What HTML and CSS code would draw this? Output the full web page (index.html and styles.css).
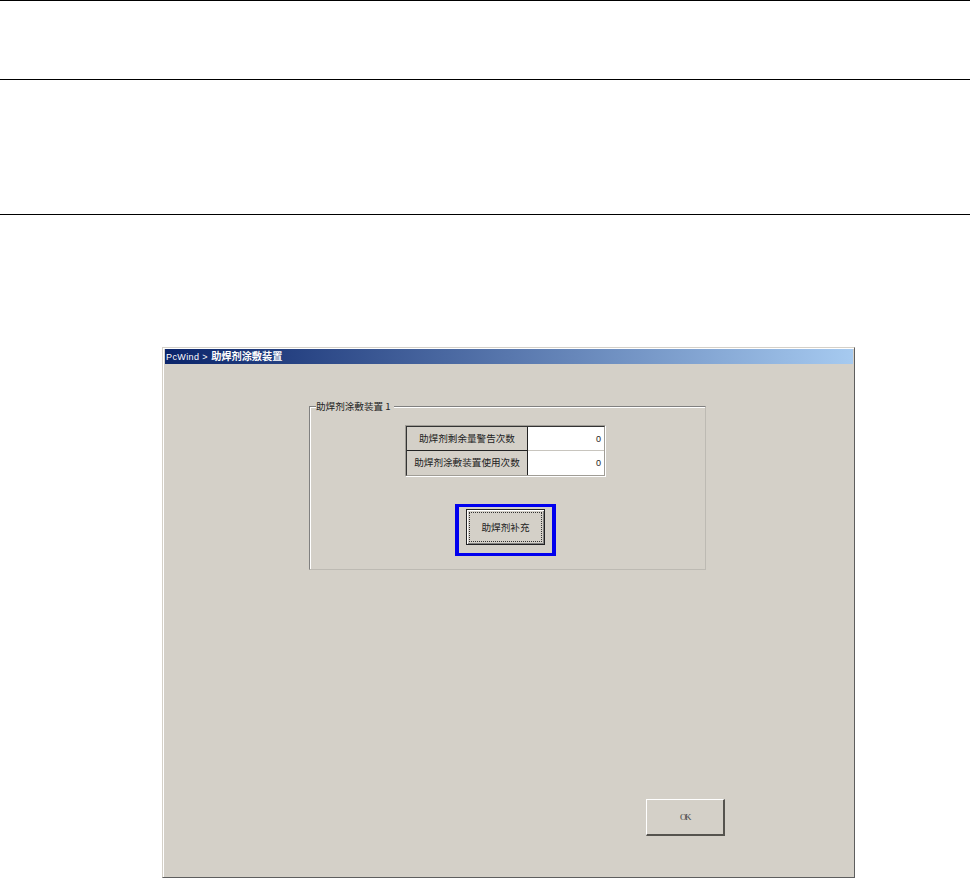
FILE: index.html
```html
<!DOCTYPE html>
<html lang="zh">
<head>
<meta charset="utf-8">
<title>PcWind</title>
<link rel="stylesheet" href="styles.css">
</head>
<body>
<div class="rows">
  <div class="row row-a"></div>
  <div class="row row-b"></div>
  <div class="row row-c"></div>
</div>
<div class="window">
  <div class="titlebar"><span class="title-latin">PcWind &gt;</span> <span class="title-cjk">助焊剂涂敷装置</span></div>
  <div class="client">
    <fieldset class="group">
      <legend class="legend">助焊剂涂敷装置 1</legend>
      <div class="grid-frame">
        <div class="grid">
          <div class="label">助焊剂剩余量警告次数</div>
          <div class="value">0</div>
          <div class="label label-last">助焊剂涂敷装置使用次数</div>
          <div class="value value-last">0</div>
        </div>
      </div>
      <div class="highlight">
        <button class="btn btn-focus"><span class="focus-ring">助焊剂补充</span></button>
      </div>
    </fieldset>
    <div class="actions">
      <button class="btn btn-ok">OK</button>
    </div>
  </div>
</div>
</body>
</html>
```
FILE: styles.css
```css
* { box-sizing: border-box; }
html, body { margin: 0; padding: 0; background: #fff; }
body {
  width: 970px;
  height: 878px;
  overflow: hidden;
  font-family: "Noto Sans CJK SC", "Liberation Sans", sans-serif;
  font-size: 9.6px;
  color: #222;
}
.row { border-top: 1px solid #000; }
.row-a { height: 79px; }
.row-b { height: 135px; }
.row-c { height: 133px; }

.window {
  width: 693px;
  height: 531px;
  margin-left: 162px;
  padding: 1px 1px 1px 2px;
  background: #d4d0c8;
  border-top: 1px solid #d4d0c8;
  border-left: 1px solid #d4d0c8;
  border-right: 1px solid #5e5e5e;
  border-bottom: 1px solid #5e5e5e;
  box-shadow: inset 1px 1px 0 #fff;
  display: flex;
  flex-direction: column;
}
.titlebar {
  height: 15px;
  flex: none;
  padding-left: 1px;
  line-height: 14px;
  white-space: nowrap;
  color: #fff;
  background: linear-gradient(90deg, #0a246a, #a6caf0);
}
.title-latin {
  font-family: "Liberation Sans", sans-serif;
  font-size: 9px;
  letter-spacing: 0.4px;
  margin-right: 1px;
}
.title-cjk {
  font-size: 10.2px;
  font-weight: 700;
}
.client {
  flex: 1;
  display: flex;
  flex-direction: column;
  padding: 36px 0 0 144px;
}
.group {
  width: 397px;
  height: 170px;
  margin: 0;
  padding: 13px 0 0;
  min-width: 0;
  border: 1px solid #808080;
  border-right-color: #bdbab3;
  border-bottom-color: #bdbab3;
  box-shadow: inset 1px 1px 0 #fff;
}
.legend {
  margin-left: 6px;
  padding: 0 3px 0 0;
  line-height: 12px;
  background: #d4d0c8;
}
.grid-frame {
  width: 201px;
  height: 52px;
  margin-left: 95px;
  border: 1px solid #a09d96;
  border-right-color: #fff;
  border-bottom-color: #fff;
}
.grid {
  display: grid;
  grid-template-columns: 121px 76px;
  grid-template-rows: 24px 24px;
  height: 50px;
  border: 1px solid #333;
  border-right-color: #a09d96;
  border-bottom-color: #a09d96;
}
.label {
  display: flex;
  align-items: center;
  justify-content: center;
  background: #d4d0c8;
  border-right: 1px solid #222;
  border-bottom: 1px solid #222;
  line-height: 1;
  white-space: nowrap;
}
.label-last { border-bottom: 0; }
.value {
  display: flex;
  align-items: center;
  justify-content: flex-end;
  padding-right: 3px;
  background: #fff;
  border-bottom: 1px solid #c8c5be;
  font-family: "Liberation Sans", sans-serif;
  font-size: 9px;
}
.value-last { border-bottom: 0; }
.highlight {
  width: 101px;
  height: 52px;
  margin: 27px 0 0 145px;
  padding: 2px 7px;
  border: 4px solid #0000ee;
  border-top-width: 3px;
  border-bottom-width: 3px;
}
.btn {
  display: flex;
  align-items: center;
  justify-content: center;
  padding: 0;
  margin: 0;
  color: #222;
  font-family: inherit;
  font-size: 9.6px;
  background: #d4d0c8;
  border: 1px solid #fff;
  border-right-color: #55534e;
  border-bottom-color: #55534e;
}
.btn-focus {
  width: 79px;
  height: 36px;
  padding: 2px;
  border: 1px solid #222;
  box-shadow: inset 1px 1px 0 #fff, inset -1px -1px 0 #808080;
}
.focus-ring {
  display: flex;
  width: 100%;
  height: 100%;
  align-items: center;
  justify-content: center;
  border: 1px dotted #333;
}
.actions {
  display: flex;
  margin-top: 229px;
  padding-left: 337px;
}
.btn-ok {
  width: 79px;
  height: 37px;
  color: #444;
  font-family: "Liberation Serif", serif;
  font-size: 9px;
  letter-spacing: -1.5px;
  border-right-width: 2px;
  border-bottom-width: 2px;
}
```
